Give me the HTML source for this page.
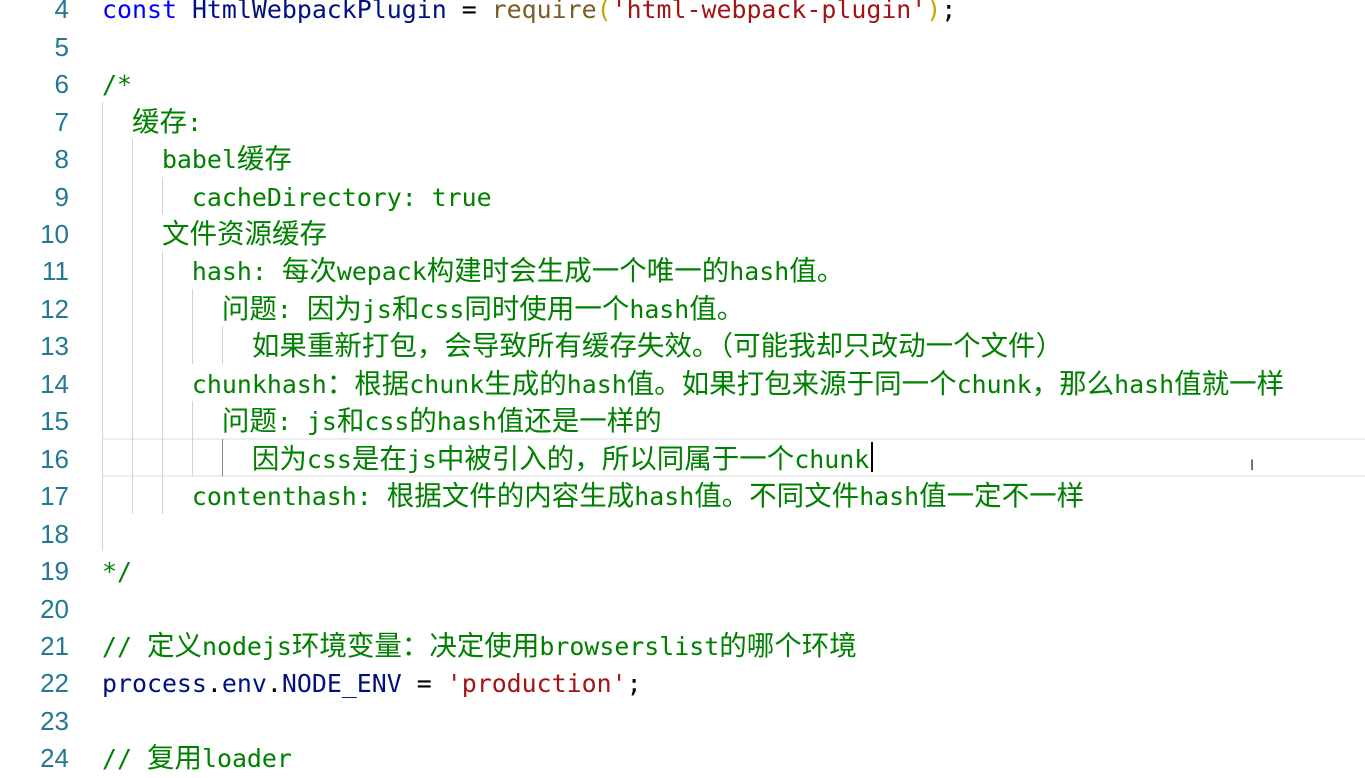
<!DOCTYPE html>
<html><head><meta charset="utf-8"><style>
body{margin:0;width:1365px;height:771px;overflow:hidden;background:#fff;position:relative;font-family:"DejaVu Sans Mono","Liberation Mono",monospace;font-size:24.9px}
.gut{position:absolute;left:0;top:-8.7px;width:69px;text-align:right;color:#237893;font-family:"Liberation Sans","DejaVu Sans",sans-serif;font-size:26px;line-height:37.45px}
.code{position:absolute;left:102px;top:-8.7px;color:#000;line-height:37.45px}
.code div{height:37.45px;white-space:pre}
.c{color:#008000}.k{color:#0000ff}.v{color:#001080}.s{color:#a31515}.f{color:#795e26}.p{color:#c9a400}
.cj{font-family:"Noto Sans CJK SC","WenQuanYi Zen Hei",sans-serif;font-size:27.5px;line-height:30px}
.g{position:absolute;width:1px;background:#d3d3d3}
.cur{position:absolute;left:102px;right:0;top:438px;height:35px;border-top:2px solid #eee;border-bottom:2px solid #eee}
</style></head><body>
<div class="cur"></div>
<div class="g" style="left:102px;top:101.65px;height:449.4px"></div>
<div class="g" style="left:132px;top:139.1px;height:374.5px"></div>
<div class="g" style="left:162px;top:176.55px;height:37.45px"></div>
<div class="g" style="left:162px;top:251.45px;height:262.15px"></div>
<div class="g" style="left:192px;top:288.9px;height:74.9px"></div>
<div class="g" style="left:192px;top:401.25px;height:74.9px"></div>
<div class="g" style="left:222px;top:326.35px;height:37.45px"></div>
<div class="g" style="left:222px;top:438.7px;height:37.45px;background:#888"></div>
<div class="gut">4<br>5<br>6<br>7<br>8<br>9<br>10<br>11<br>12<br>13<br>14<br>15<br>16<br>17<br>18<br>19<br>20<br>21<br>22<br>23<br>24</div>
<div class="code"><div><span class="k">const</span> <span class="v">HtmlWebpackPlugin</span> = <span class="f">require</span><span class="p">(</span><span class="s">'html-webpack-plugin'</span><span class="p">)</span>;</div><div></div><div class="c">/*</div><div class="c">  <span class="cj">缓存</span>:</div><div class="c">    babel<span class="cj">缓存</span></div><div class="c">      cacheDirectory: true</div><div class="c">    <span class="cj">文件资源缓存</span></div><div class="c">      hash: <span class="cj">每次</span>wepack<span class="cj">构建时会生成一个唯一的</span>hash<span class="cj">值。</span></div><div class="c">        <span class="cj">问题</span>: <span class="cj">因为</span>js<span class="cj">和</span>css<span class="cj">同时使用一个</span>hash<span class="cj">值。</span></div><div class="c">          <span class="cj">如果重新打包，会导致所有缓存失效。（可能我却只改动一个文件）</span></div><div class="c">      chunkhash<span class="cj">：根据</span>chunk<span class="cj">生成的</span>hash<span class="cj">值。如果打包来源于同一个</span>chunk<span class="cj">，那么</span>hash<span class="cj">值就一样</span></div><div class="c">        <span class="cj">问题</span>: js<span class="cj">和</span>css<span class="cj">的</span>hash<span class="cj">值还是一样的</span></div><div class="c">          <span class="cj">因为</span>css<span class="cj">是在</span>js<span class="cj">中被引入的，所以同属于一个</span>chunk</div><div class="c">      contenthash: <span class="cj">根据文件的内容生成</span>hash<span class="cj">值。不同文件</span>hash<span class="cj">值一定不一样</span></div><div></div><div class="c">*/</div><div></div><div class="c">// <span class="cj">定义</span>nodejs<span class="cj">环境变量：决定使用</span>browserslist<span class="cj">的哪个环境</span></div><div><span class="v">process</span>.<span class="v">env</span>.<span class="v">NODE_ENV</span> = <span class="s">'production'</span>;</div><div></div><div class="c">// <span class="cj">复用</span>loader</div></div>
<div style="position:absolute;left:871px;top:442px;width:2px;height:30px;background:#000"></div>
<div style="position:absolute;left:1250px;top:458px;font-size:14px;color:#333;font-family:'DejaVu Sans',sans-serif">I</div>
</body></html>
